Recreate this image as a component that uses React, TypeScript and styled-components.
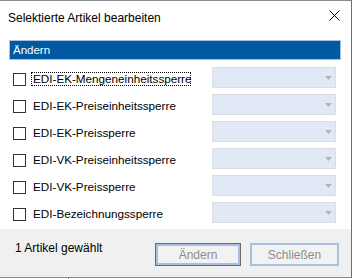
import React from "react";
import styled, { createGlobalStyle } from "styled-components";

const Global = createGlobalStyle`
  html, body { margin: 0; padding: 0; background: #ffffff; }
  body { width: 353px; height: 279px; overflow: hidden; }
`;

const Window = styled.div`
  width: 351px;
  height: 276px;
  border-top: 1px solid #8a8a8a;
  border-right: 1px solid #6e6e6e;
  border-bottom: 1px solid #8a8a8a;
  background: #ffffff;
  display: flex;
  flex-direction: column;
`;

const TitleBar = styled.div`
  height: 39px;
  display: flex;
  align-items: flex-start;
  justify-content: space-between;
  padding: 0 11px 0 8px;
`;

const Title = styled.div`
  font-family: "Segoe UI", "Liberation Sans", Arial, sans-serif;
  font-size: 12px;
  color: #000;
  margin-top: 10px;
  line-height: 15px;
`;

const CloseIcon = styled.svg`
  width: 11px;
  height: 11px;
  margin-top: 9px;
`;

const Body = styled.div`
  flex: 1;
  padding: 0 10px 0 9px;
  display: flex;
  flex-direction: column;
`;

const ActionBar = styled.div`
  height: 18px;
  border: 1px solid #a9c1dd;
  background: #0059a1;
  color: #ffffff;
  font-family: "Liberation Sans", Arial, sans-serif;
  font-size: 11.5px;
  line-height: 18px;
  padding-left: 3px;
`;

const Rows = styled.div`
  display: flex;
  flex-direction: column;
  margin-top: 7px;
`;

const Row = styled.div`
  height: 27px;
  display: flex;
  align-items: flex-start;
`;

const Box = styled.div`
  width: 11px;
  height: 11px;
  border: 1px solid #333333;
  background: #ffffff;
  margin: 6px 0 0 4px;
`;

const Label = styled.div<{ $focused?: boolean }>`
  width: 157px;
  margin: 5px 0 0 5px;
  padding-left: 1px;
  height: 12px;
  border: 1px dotted ${(p) => (p.$focused ? "#000000" : "transparent")};
  font-family: "Liberation Sans", Arial, sans-serif;
  font-size: 11.7px;
  line-height: 12px;
  color: #000;
  white-space: nowrap;
`;

const Select = styled.div`
  margin-left: 21px;
  width: 119px;
  height: 19px;
  border: 1px solid #dadde3;
  background: #e2e9f6;
  display: flex;
  align-items: center;
  justify-content: flex-end;
  padding-right: 3px;
`;

const Arrow = styled.svg`
  width: 7px;
  height: 4px;
`;

const Footer = styled.div`
  height: 48px;
  background: #f0f0f0;
  display: flex;
  align-items: flex-start;
  padding: 0 12px 0 15px;
`;

const Status = styled.div`
  font-family: "Segoe UI", "Liberation Sans", Arial, sans-serif;
  font-size: 12px;
  line-height: 15px;
  color: #000;
  margin-top: 12px;
  flex: 1;
`;

const Button = styled.div<{ $primary?: boolean; $w: number }>`
  width: ${(p) => p.$w}px;
  height: 23px;
  margin-top: 14px;
  margin-left: ${(p) => (p.$primary ? 0 : 9)}px;
  box-sizing: border-box;
  border: ${(p) => (p.$primary ? "1px solid #6a6a6a" : "2px solid #a8c0df")};
  box-shadow: ${(p) => (p.$primary ? "inset 0 0 0 2px #a8c0df" : "none")};
  background: #f2f2f2;
  color: #8d8d8d;
  font-family: "Segoe UI", "Liberation Sans", Arial, sans-serif;
  font-size: 12px;
  display: flex;
  align-items: center;
  justify-content: center;
`;

const Under = styled.div`
  height: 2px;
  display: flex;
  align-items: flex-start;
`;

const UnderLine = styled.div`
  width: 1px;
  height: 2px;
  margin-left: 68px;
  background: #a0a0a0;
`;

const labels = [
  "EDI-EK-Mengeneinheitssperre",
  "EDI-EK-Preiseinheitssperre",
  "EDI-EK-Preissperre",
  "EDI-VK-Preiseinheitssperre",
  "EDI-VK-Preissperre",
  "EDI-Bezeichnungssperre",
];

export default function App() {
  return (
    <>
      <Global />
      <Window>
        <TitleBar>
          <Title>Selektierte Artikel bearbeiten</Title>
          <CloseIcon viewBox="0 0 11 11">
            <path d="M0.5 0.5 L10.5 10.5 M10.5 0.5 L0.5 10.5" stroke="#000" strokeWidth="1" />
          </CloseIcon>
        </TitleBar>
        <Body>
          <ActionBar>Ändern</ActionBar>
          <Rows>
            {labels.map((l, i) => (
              <Row key={l}>
                <Box />
                <Label $focused={i === 0}>{l}</Label>
                <Select>
                  <Arrow viewBox="0 0 7 4">
                    <path d="M0 0 H7 L3.5 4 Z" fill="#b4b4b4" />
                  </Arrow>
                </Select>
              </Row>
            ))}
          </Rows>
        </Body>
        <Footer>
          <Status>1 Artikel gewählt</Status>
          <Button $primary $w={86}>Ändern</Button>
          <Button $w={89}>Schließen</Button>
        </Footer>
      </Window>
      <Under>
        <UnderLine />
      </Under>
    </>
  );
}
